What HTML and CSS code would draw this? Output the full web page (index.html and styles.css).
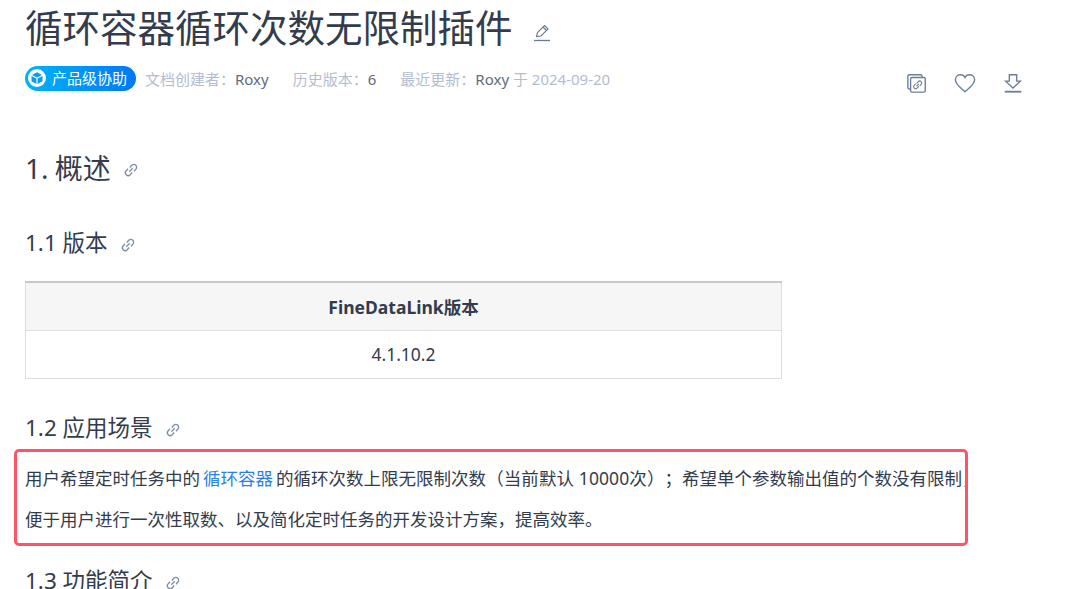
FILE: index.html
```html
<!DOCTYPE html>
<html lang="zh-CN">
<head>
<meta charset="utf-8">
<title>循环容器循环次数无限制插件</title>
<link rel="stylesheet" href="styles.css">
</head>
<body>
<main class="page">
  <h1 class="title">循环容器循环次数无限制插件<svg class="edit" viewBox="0 0 18 18" fill="none" stroke="#6b7a90" stroke-width="1.100"><path d="M3.500 12.500 4.500 8.500 11.500 1.500 15 5 8 12Z M10 3 13.500 6.500"/><path d="M1 16.500H17" stroke-width="1.300"/></svg></h1>
  <div class="meta">
    <div class="meta-left">
      <span class="badge"><svg class="badge-icon" viewBox="0 0 18 18"><circle cx="9" cy="9" r="9" fill="#fff"/><path d="M9 3.300 14 6 9 8.600 4 6Z" fill="#0a9cf5"/><path d="M3.500 7 8.400 9.600V15L3.500 12.200Z M14.500 7 9.600 9.600V15L14.500 12.200Z" fill="#0a9cf5"/></svg>产品级协助</span>
      <span class="meta-item">文档创建者：<b>Roxy</b></span>
      <span class="meta-item">历史版本：<b>6</b></span>
      <span class="meta-item">最近更新：<b>Roxy</b> 于 2024-09-20</span>
    </div>
    <div class="actions">
      <svg class="action" viewBox="0 0 24 24" fill="none" stroke="#6b7f99" stroke-width="1.500"><path d="M5 18.500H3.500Q2 18.500 2 17V4.500Q2 3 3.500 3H16Q17.500 3 17.500 4.500V5.500"/><rect x="5" y="6" width="16" height="16" rx="1.500" fill="#fff"/><path d="M11.500 12.500 13.500 10.500A2 2 0 0 1 16.500 13.500L15 15M14 15.500 12 17.500A2 2 0 0 1 9 14.500L10.500 13M11.500 15.500 14 13" stroke-width="1.200"/></svg>
      <svg class="action" viewBox="0 0 24 24" fill="none" stroke="#6b7f99" stroke-width="1.500"><path d="M12 21.500C7 17 1.500 13.500 1.500 8.500 1.500 5 4.300 3 7 3 9 3 11 4 12 6 13 4 15 3 17 3 19.700 3 22.500 5 22.500 8.500 22.500 13.500 17 17 12 21.500Z"/></svg>
      <svg class="action" viewBox="0 0 24 24" fill="none" stroke="#6b7f99" stroke-width="1.500"><path d="M8 3H16V10H20L12 17.500 4 10H8Z"/><path d="M3 21.500H21" stroke-width="2"/></svg>
    </div>
  </div>

  <h2 class="h-one">1. 概述<svg class="anchor" viewBox="0 0 16 16" fill="none" stroke="#7f8ea3" stroke-width="1.300"><path d="M6.800 5.500 8.800 3.300A2.800 2.800 0 0 1 12.800 7.300L11 9.200M9.200 10.500 7.200 12.700A2.800 2.800 0 0 1 3.200 8.700L5 6.800M6.300 9.700 9.700 6.300"/></svg></h2>
  <h3 class="h-two h-version">1.1 版本<svg class="anchor" viewBox="0 0 16 16" fill="none" stroke="#7f8ea3" stroke-width="1.300"><path d="M6.800 5.500 8.800 3.300A2.800 2.800 0 0 1 12.800 7.300L11 9.200M9.200 10.500 7.200 12.700A2.800 2.800 0 0 1 3.200 8.700L5 6.800M6.300 9.700 9.700 6.300"/></svg></h3>
  <table class="versions">
    <thead><tr><th>FineDataLink版本</th></tr></thead>
    <tbody><tr><td>4.1.10.2</td></tr></tbody>
  </table>
  <h3 class="h-two h-scene">1.2 应用场景<svg class="anchor" viewBox="0 0 16 16" fill="none" stroke="#7f8ea3" stroke-width="1.300"><path d="M6.800 5.500 8.800 3.300A2.800 2.800 0 0 1 12.800 7.300L11 9.200M9.200 10.500 7.200 12.700A2.800 2.800 0 0 1 3.200 8.700L5 6.800M6.300 9.700 9.700 6.300"/></svg></h3>
  <p class="body">用户希望定时任务中的 <a class="link" href="#">循环容器</a> 的循环次数上限无限制次数<span class="note">（当前默认 10000次）</span>；希望单个参数输出值的个数没有限制，<br>便于用户进行一次性取数、以及简化定时任务的开发设计方案，提高效率。</p>
  <h3 class="h-two h-func">1.3 功能简介<svg class="anchor" viewBox="0 0 16 16" fill="none" stroke="#7f8ea3" stroke-width="1.300"><path d="M6.800 5.500 8.800 3.300A2.800 2.800 0 0 1 12.800 7.300L11 9.200M9.200 10.500 7.200 12.700A2.800 2.800 0 0 1 3.200 8.700L5 6.800M6.300 9.700 9.700 6.300"/></svg></h3>
  <div class="highlight"></div>
</main>
</body>
</html>
```
FILE: styles.css
```css
* { box-sizing: border-box; }
html, body { margin: 0; height: 100%; overflow: hidden; background: #fff; }
body {
  font-family: "Noto Sans", "Noto Sans CJK SC", sans-serif;
  color: #333c4d;
  text-spacing-trim: space-all;
}
.page { position: relative; width: 1090px; height: 589px; overflow: hidden; padding: 0 25px; }
.title { margin: 0; padding-top: 3px; font-size: 37.500px; line-height: 50px; font-weight: 400; display: flex; align-items: center; }
.edit { width: 18px; height: 18px; margin: 10px 0 0 20px; }
.meta { display: flex; justify-content: space-between; align-items: center; margin-top: 13px; height: 24px; width: 999px; font-size: 15px; line-height: 24px; color: #b4bdcf; }
.meta-left { display: flex; align-items: center; }
.meta-item { margin: 1px 24px 0 0; white-space: nowrap; }
.meta-item b { font-weight: 400; color: #5f6b7e; }
.badge { display: inline-flex; align-items: center; height: 25px; width: 111px; margin-right: 9px; padding-left: 3px; border-radius: 13px; background: linear-gradient(90deg, #00b4f8, #0078f5); color: #fff; font-size: 15px; white-space: nowrap; }
.badge-icon { width: 18px; height: 18px; margin-right: 6px; }
.actions { display: flex; gap: 26px; margin-top: 9px; }
.action { width: 22px; height: 22px; }
.h-one, .h-two { margin: 0; font-weight: 400; display: flex; align-items: center; white-space: nowrap; }
.h-one { font-size: 28px; line-height: 36px; margin-top: 60px; word-spacing: -1px; }
.h-two { font-size: 22.500px; line-height: 30px; }
.anchor { width: 16px; height: 16px; margin-left: 12px; margin-top: 4px; }
.h-version { margin-top: 42px; }
.versions { width: 757px; height: 97px; margin-top: 23px; border-collapse: collapse; font-size: 17.500px; text-align: center; }
.versions th, .versions td { border: 1px solid #dcdee2; padding: 0; height: 48px; }
.versions th { background: #f6f6f6; border-top: 2px solid #c8c8c8; font-weight: 700; }
.h-scene { margin-top: 34px; }
.body { margin: 15px 0 0; font-size: 17.500px; line-height: 41px; white-space: nowrap; word-spacing: -1.500px; }
.note { word-spacing: 0; letter-spacing: 0.100px; }
.link { color: #2b7fe8; text-decoration: none; }
.h-func { margin-top: 26px; }
.highlight { position: absolute; left: 14px; top: 449px; width: 954px; height: 97px; border: 3px solid #ff5367; border-radius: 5px; pointer-events: none; }
```
